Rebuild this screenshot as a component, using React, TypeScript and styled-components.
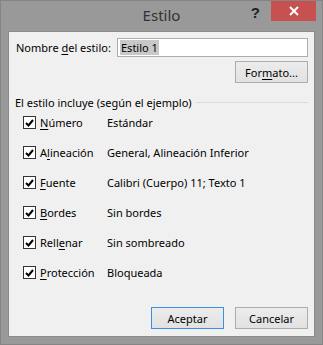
import styled, { createGlobalStyle } from 'styled-components'

const GlobalStyle = createGlobalStyle`
  html, body {
    margin: 0;
    padding: 0;
    background: #999;
  }
  * { box-sizing: border-box; }
`

const Window = styled.div`
  width: 323px;
  height: 345px;
  background: #999999;
  border: 1px solid #858585;
  display: flex;
  flex-direction: column;
  font-family: "Noto Sans", "Open Sans", sans-serif;
  font-size: 11px;
  color: #000;
  white-space: nowrap;
`

const TitleBar = styled.div`
  height: 30px;
  position: relative;
`

const Title = styled.div`
  position: absolute;
  left: 0;
  right: 0;
  top: 4px;
  text-align: center;
  font-size: 15px;
  color: #333;
`

const HelpGlyph = styled.div`
  position: absolute;
  top: 3px;
  right: 62px;
  font-size: 15px;
  font-weight: bold;
  color: #222;
  font-family: "Liberation Sans", sans-serif;
`

const CloseButton = styled.div`
  position: absolute;
  right: 6px;
  top: 0;
  width: 45px;
  height: 20px;
  background: #c75050;
  display: flex;
  align-items: center;
  justify-content: center;
`

const Client = styled.div`
  margin: 0 7px;
  height: 306px;
  background: #f0f0f0;
  border: 1px solid #8a8a8a;
  padding: 6px 6px 7px 6px;
  display: flex;
  flex-direction: column;
`

const NameRow = styled.div`
  display: flex;
  align-items: center;
  height: 19px;
`

const Label = styled.span`
  width: 102px;
  padding-left: 1px;
`

const TextInput = styled.div`
  flex: 1;
  height: 19px;
  background: #fff;
  border: 1px solid #adadad;
  padding: 1px 2px;
  display: flex;
  align-items: center;
`

const Selected = styled.span`
  background: #c8c8c8;
  padding: 0 1px;
  line-height: 15px;
`

const Button = styled.div<{ $default?: boolean }>`
  width: 73px;
  height: 22px;
  border: 1px solid ${p => (p.$default ? '#3c8fe0' : '#adadad')};
  background: linear-gradient(#ececec, #e2e2e2);
  display: flex;
  align-items: center;
  justify-content: center;
`

const RightRow = styled.div<{ $top: number }>`
  display: flex;
  justify-content: flex-end;
  gap: 11px;
  margin-top: ${p => p.$top}px;
`

const GroupHeader = styled.div`
  display: flex;
  align-items: center;
  gap: 4px;
  margin-top: 12px;
  padding-left: 0;
  &::after {
    content: '';
    flex: 1;
    height: 1px;
    background: #dcdcdc;
  }
`

const List = styled.div`
  display: flex;
  flex-direction: column;
  padding-left: 8px;
  margin-top: 6px;
  gap: 17px;
`

const Row = styled.div`
  display: flex;
  align-items: center;
  height: 13px;
`

const Box = styled.div`
  flex: none;
  width: 13px;
  height: 13px;
  border: 1px solid #333;
  background: #fff;
  display: flex;
  align-items: center;
  justify-content: center;
  margin-right: 4px;
`

const RowLabel = styled.span`
  flex: none;
  width: 67px;
`

const Spacer = styled.div`
  flex: 1;
`

const K = styled.u`
  text-decoration-thickness: 1px;
  text-underline-offset: 2px;
`

const Check = () => (
  <svg width="9" height="8" viewBox="0 0 9 8">
    <path d="M1 4 L3.5 6.5 L8 1" stroke="#000" strokeWidth="2" fill="none" />
  </svg>
)

const rows: [React.ReactNode, string][] = [
  [<><K>N</K>úmero</>, 'Estándar'],
  [<>A<K>l</K>ineación</>, 'General, Alineación Inferior'],
  [<><K>F</K>uente</>, 'Calibri (Cuerpo) 11; Texto 1'],
  [<><K>B</K>ordes</>, 'Sin bordes'],
  [<>Rell<K>e</K>nar</>, 'Sin sombreado'],
  [<><K>P</K>rotección</>, 'Bloqueada'],
]

function App() {
  return (
    <>
      <GlobalStyle />
      <Window>
        <TitleBar>
          <Title>Estilo</Title>
          <HelpGlyph>?</HelpGlyph>
          <CloseButton>
            <svg width="10" height="10" viewBox="0 0 10 10">
              <path d="M1 1 L9 9 M9 1 L1 9" stroke="#fff" strokeWidth="2" />
            </svg>
          </CloseButton>
        </TitleBar>
        <Client>
          <NameRow>
            <Label>Nombre <K>d</K>el estilo:</Label>
            <TextInput>
              <Selected>Estilo 1</Selected>
            </TextInput>
          </NameRow>
          <RightRow $top={4}>
            <Button>For<K>m</K>ato...</Button>
          </RightRow>
          <GroupHeader>El estilo incluye (según el ejemplo)</GroupHeader>
          <List>
            {rows.map(([label, value], i) => (
              <Row key={i}>
                <Box><Check /></Box>
                <RowLabel>{label}</RowLabel>
                <span>{value}</span>
              </Row>
            ))}
          </List>
          <Spacer />
          <RightRow $top={0}>
            <Button $default>Aceptar</Button>
            <Button>Cancelar</Button>
          </RightRow>
        </Client>
      </Window>
    </>
  )
}

export default App
